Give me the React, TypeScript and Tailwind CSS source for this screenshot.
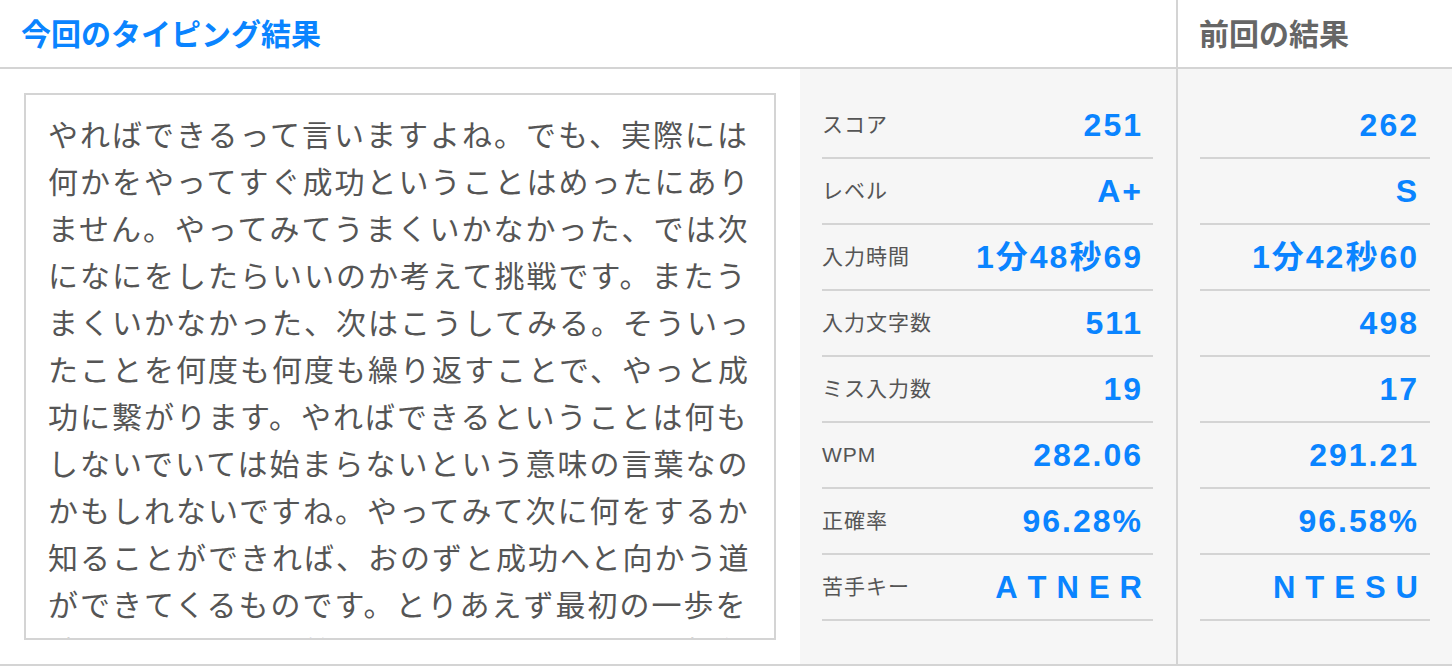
const lines = [
  "やればできるって言いますよね。でも、実際には",
  "何かをやってすぐ成功ということはめったにあり",
  "ません。やってみてうまくいかなかった、では次",
  "になにをしたらいいのか考えて挑戦です。またう",
  "まくいかなかった、次はこうしてみる。そういっ",
  "たことを何度も何度も繰り返すことで、やっと成",
  "功に繋がります。やればできるということは何も",
  "しないでいては始まらないという意味の言葉なの",
  "かもしれないですね。やってみて次に何をするか",
  "知ることができれば、おのずと成功へと向かう道",
  "ができてくるものです。とりあえず最初の一歩を",
  "踏み出すことから始めてみましょう。まずは挑戦",
];

type Stat = { label: string; cur: string; prev: string; keys?: boolean };

const stats: Stat[] = [
  { label: "スコア", cur: "251", prev: "262" },
  { label: "レベル", cur: "A+", prev: "S" },
  { label: "入力時間", cur: "1分48秒69", prev: "1分42秒60" },
  { label: "入力文字数", cur: "511", prev: "498" },
  { label: "ミス入力数", cur: "19", prev: "17" },
  { label: "WPM", cur: "282.06", prev: "291.21" },
  { label: "正確率", cur: "96.28%", prev: "96.58%" },
  { label: "苦手キー", cur: "ATNER", prev: "NTESU", keys: true },
];

function Value({ text, keys }: { text: string; keys?: boolean }) {
  if (keys) {
    return (
      <div className="flex gap-[10px] text-[31px] font-bold text-[#0a84ff] font-['Liberation_Sans','Noto_Sans_CJK_JP',sans-serif] leading-none">
        {text.split("").map((c, i) => (
          <span key={i}>{c}</span>
        ))}
      </div>
    );
  }
  return (
    <div className="text-[32px] font-bold text-[#0a84ff] tracking-[2px] -mr-[1px] font-['Liberation_Sans','Noto_Sans_CJK_JP',sans-serif] leading-none">
      {text}
    </div>
  );
}

export default function App() {
  return (
    <div className="w-[1452px] h-[666px] flex border-b-2 border-[#d4d4d4] bg-white overflow-hidden font-['Noto_Sans_CJK_JP',sans-serif]">
      <div className="w-[1176px] flex flex-col">
        <div className="h-[69px] shrink-0 border-b-2 border-[#d4d4d4] flex items-center pl-[21px] pb-[4px]">
          <h1 className="text-[30px] font-bold text-[#0a84ff] leading-none">今回のタイピング結果</h1>
        </div>
        <div className="flex-1 flex min-h-0">
          <div className="w-[800px] p-[24px] flex">
            <div className="flex-1 border-2 border-[#d4d4d4] overflow-hidden pt-[15px] px-[22px]">
              {lines.map((l, i) => (
                <div key={i} className="whitespace-nowrap text-[30px] tracking-[2px] leading-[47px] text-[#555]">
                  {l}
                </div>
              ))}
            </div>
          </div>
          <div className="flex-1 bg-[#f6f6f6] pt-[24px] pl-[22px] pr-[23px]">
            {stats.map((s) => (
              <div key={s.label} className="h-[66px] border-b-2 border-[#d4d4d4] flex items-center justify-between pr-[11px]">
                <span className="text-[21px] tracking-[1px] text-[#555] font-['Liberation_Sans','Noto_Sans_CJK_JP',sans-serif]">{s.label}</span>
                <Value text={s.cur} keys={s.keys} />
              </div>
            ))}
          </div>
        </div>
      </div>
      <div className="w-[2px] bg-[#d4d4d4]" />
      <div className="flex-1 flex flex-col">
        <div className="h-[69px] shrink-0 border-b-2 border-[#d4d4d4] flex items-center pl-[21px] pb-[4px]">
          <h2 className="text-[30px] font-bold text-[#666] leading-none">前回の結果</h2>
        </div>
        <div className="flex-1 bg-[#f6f6f6] pt-[24px] px-[22px]">
          {stats.map((s) => (
            <div key={s.label} className="h-[66px] border-b-2 border-[#d4d4d4] flex items-center justify-end pr-[12px]">
              <Value text={s.prev} keys={s.keys} />
            </div>
          ))}
        </div>
      </div>
    </div>
  );
}
